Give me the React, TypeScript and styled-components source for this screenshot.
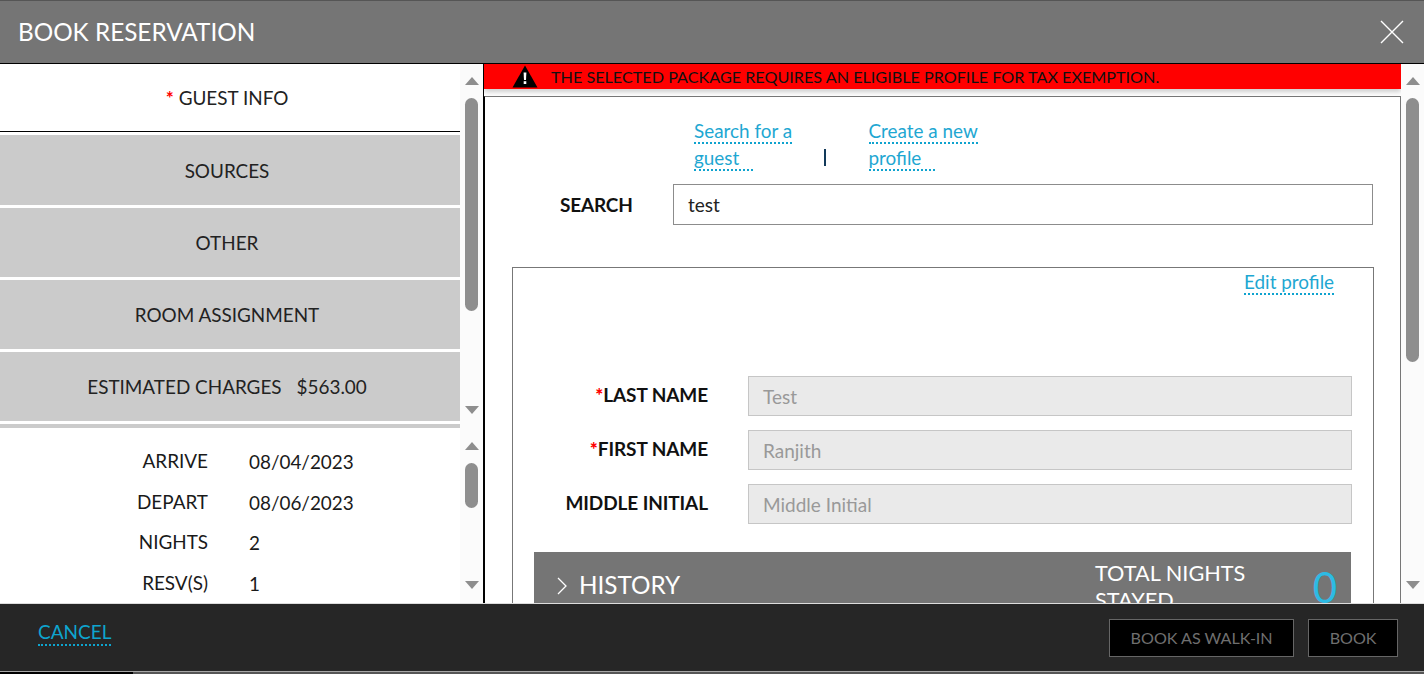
import { createGlobalStyle } from "styled-components";
import styled from "styled-components";

const Global = createGlobalStyle`
  html, body {
    margin: 0;
    padding: 0;
    height: 100%;
    overflow: hidden;
    background: #fff;
    font-family: Lato, "Open Sans", sans-serif;
  }
  * { box-sizing: border-box; }
`;

const Page = styled.div`
  width: 1424px;
  height: 674px;
  display: flex;
  flex-direction: column;
  overflow: hidden;
`;

const Header = styled.header`
  height: 64px;
  flex: none;
  background: #757575;
  border-top: 1px solid #555;
  border-bottom: 1px solid #000;
  display: flex;
  align-items: center;
  justify-content: space-between;
  padding: 0 20px 0 18px;
  color: #fff;
  > h1 {
    margin: -2px 0 0;
    font-size: 24.3px;
    font-weight: 400;
  }
`;

const Body = styled.div`
  height: 539px;
  flex: none;
  display: flex;
  overflow: hidden;
`;

const LeftColumn = styled.div`
  width: 484px;
  flex: none;
  border-right: 1px solid #000;
  display: flex;
  flex-direction: column;
`;

const TabsPane = styled.div`
  height: 364px;
  flex: none;
  display: flex;
`;

const TabList = styled.div`
  width: 460px;
  flex: none;
  display: flex;
  flex-direction: column;
  gap: 3px;
`;

const Tab = styled.div<{ $active?: boolean }>`
  height: ${(p) => (p.$active ? "68px" : "69px")};
  flex: none;
  display: flex;
  align-items: center;
  justify-content: center;
  padding-right: 6px;
  font-size: 18.9px;
  color: #222;
  background: ${(p) => (p.$active ? "#fff" : "#cbcbcb")};
  border-bottom: ${(p) => (p.$active ? "1px solid #000" : "none")};
  &:nth-child(2) {
    height: 70px;
  }
  > b {
    color: #f00;
    font-weight: 700;
    margin-right: 5px;
  }
  > span + span {
    margin-left: 15px;
  }
`;

const TabDivider = styled.div`
  height: 4px;
  flex: none;
  background: #cbcbcb;
`;

const SummaryPane = styled.div`
  flex: 1;
  min-height: 0;
  display: flex;
`;

const Summary = styled.div`
  width: 460px;
  flex: none;
  background: #fff;
  padding-top: 14px;
  display: grid;
  grid-template-columns: 208px 1fr;
  grid-auto-rows: 40.67px;
  column-gap: 41px;
  align-content: start;
  font-size: 18.9px;
  color: #1a1a1a;
  overflow: hidden;
`;

const SummaryLabel = styled.div`
  text-align: right;
  line-height: 38px;
`;

const SummaryValue = styled.div`
  line-height: 40px;
`;

const Track = styled.div<{ $top: number }>`
  width: 23px;
  flex: none;
  background: #fbfbfb;
  display: flex;
  flex-direction: column;
  align-items: center;
  padding: ${(p) => p.$top}px 0 14px;
`;

const ArrowUp = styled.div`
  flex: none;
  width: 0;
  height: 0;
  border-left: 7.5px solid transparent;
  border-right: 7.5px solid transparent;
  border-bottom: 8px solid #8e8e8e;
`;

const ArrowDown = styled(ArrowUp)`
  border-bottom: none;
  border-top: 8px solid #8e8e8e;
  margin-top: auto;
`;

const Thumb = styled.div<{ $size: number }>`
  flex: none;
  width: 13px;
  margin-top: 13px;
  height: ${(p) => p.$size}px;
  border-radius: 7px;
  background: #8e8e8e;
`;

function Scrollbar({ top = 13, size }: { top?: number; size: number }) {
  return (
    <Track $top={top}>
      <ArrowUp />
      <Thumb $size={size} />
      <ArrowDown />
    </Track>
  );
}

const RightColumn = styled.div`
  flex: 1;
  min-width: 0;
  display: flex;
`;

const Content = styled.div`
  width: 917px;
  flex: none;
  overflow: hidden;
  display: flex;
  flex-direction: column;
`;

const Alert = styled.div`
  height: 25px;
  flex: none;
  background: #f00;
  display: flex;
  align-items: center;
  padding-left: 28px;
  gap: 13px;
  font-size: 16.2px;
  color: #111;
  box-shadow: 0 3px 5px rgba(0, 0, 0, 0.2);
  position: relative;
`;

const GuestPanel = styled.section`
  margin-top: 7px;
  flex: 1;
  min-height: 0;
  border: 1px solid #777;
  border-left-color: #000;
  border-bottom: none;
  padding: 0 27px;
  overflow: hidden;
`;

const LinkRow = styled.div`
  display: flex;
  align-items: center;
  margin-left: 182px;
  padding-top: 20px;
`;

const LinkText = styled.a<{ $width?: number }>`
  display: block;
  width: ${(p) => p.$width ?? 120}px;
  font-size: 18.9px;
  line-height: 27px;
  color: #1ea7d2;
  white-space: nowrap;
  > span {
    border-bottom: 2px dotted #0fa3cf;
    display: inline-block;
    line-height: 23px;
  }
  > span + br + span {
    margin-top: 2px;
    padding-right: 14px;
  }
`;

const LinkDivider = styled.div`
  width: 1.5px;
  height: 17px;
  background: #123a5a;
  margin: 27px 43px 0 0;
`;

const SearchRow = styled.div`
  display: flex;
  align-items: center;
  margin-top: 13px;
  height: 41px;
`;

const SearchLabel = styled.label`
  width: 120px;
  margin-left: 48px;
  font-size: 19px;
  font-weight: 700;
  color: #111;
  flex: none;
  letter-spacing: -0.2px;
`;

const SearchInput = styled.div`
  width: 700px;
  height: 41px;
  flex: none;
  margin-left: -7px;
  border: 1px solid #8c8c8c;
  padding: 0 14px;
  display: flex;
  align-items: center;
  font-size: 19px;
  color: #222;
`;

const ProfileCard = styled.div`
  width: 862px;
  margin-top: 42px;
  border: 1px solid #777;
  border-bottom: none;
  height: 400px;
  padding: 0 21px;
`;

const EditRow = styled.div`
  display: flex;
  justify-content: flex-end;
  padding: 0 18px 0 0;
  height: 108px;
`;

const FieldRow = styled.div`
  display: flex;
  align-items: center;
  margin-bottom: 14px;
`;

const FieldLabel = styled.label`
  width: 174px;
  flex: none;
  text-align: right;
  font-size: 19px;
  font-weight: 700;
  color: #111;
  letter-spacing: -0.1px;
  padding-bottom: 4px;
  > b {
    color: #f00;
  }
`;

const FieldInput = styled.div`
  width: 604px;
  height: 40px;
  margin-left: 40px;
  background: #eaeaea;
  border: 1px solid #c6c6c6;
  display: flex;
  align-items: center;
  padding: 0 14px;
  font-size: 19px;
  color: #999;
`;

const HistoryBar = styled.div`
  margin-top: 28px;
  width: 817px;
  height: 70px;
  background: #757575;
  color: #fff;
  display: flex;
  align-items: flex-start;
  padding: 7px 14px 0 22px;
  > svg {
    margin-top: 18px;
    flex: none;
  }
  > h2 {
    margin: 11px 0 0 11px;
    font-size: 24.3px;
    line-height: 30px;
    font-weight: 400;
    flex: 1;
  }
`;

const TotalLabel = styled.div`
  width: 170px;
  margin: 1px 46px 0 0;
  font-size: 21.7px;
  line-height: 27px;
`;

const TotalValue = styled.div`
  font-size: 42px;
  line-height: 57px;
  color: #2dbbe4;
  width: 26px;
  text-align: right;
`;

const Footer = styled.footer`
  height: 68px;
  flex: none;
  background: #262626;
  border-top: 1px solid #ddd;
  display: flex;
  align-items: center;
  padding: 0 26px 0 38px;
  > a {
    font-size: 19px;
    color: #0ea5cf;
    border-bottom: 2px dotted #0ea5cf;
    line-height: 24px;
    margin-right: auto;
    margin-top: -9px;
  }
`;

const FooterButton = styled.button`
  height: 38px;
  margin-left: 14px;
  padding: 0 20.5px;
  background: #000;
  border: 1px solid #666;
  color: #6f6f6f;
  font-family: inherit;
  font-size: 16.1px;
`;

const BottomStrip = styled.div`
  flex: 1;
  background: #555;
  border-top: 1px solid #a5a5a5;
  > div {
    width: 133px;
    height: 100%;
    background: #000;
  }
`;

function App() {
  return (
    <Page>
      <Global />
      <Header>
        <h1>BOOK RESERVATION</h1>
        <svg width="24" height="24" viewBox="0 0 24 24" fill="none" stroke="#fff" strokeWidth="1.4">
          <path d="M1 1 L23 23 M23 1 L1 23" />
        </svg>
      </Header>
      <Body>
        <LeftColumn>
          <TabsPane>
            <TabList>
              <Tab $active>
                <b>*</b>GUEST INFO
              </Tab>
              <Tab>SOURCES</Tab>
              <Tab>OTHER</Tab>
              <Tab>ROOM ASSIGNMENT</Tab>
              <Tab>
                <span>ESTIMATED CHARGES</span>
                <span>$563.00</span>
              </Tab>
              <TabDivider />
            </TabList>
            <Scrollbar size={213} />
          </TabsPane>
          <SummaryPane>
            <Summary>
              <SummaryLabel>ARRIVE</SummaryLabel>
              <SummaryValue>08/04/2023</SummaryValue>
              <SummaryLabel>DEPART</SummaryLabel>
              <SummaryValue>08/06/2023</SummaryValue>
              <SummaryLabel>NIGHTS</SummaryLabel>
              <SummaryValue>2</SummaryValue>
              <SummaryLabel>RESV(S)</SummaryLabel>
              <SummaryValue>1</SummaryValue>
            </Summary>
            <Scrollbar top={14} size={45} />
          </SummaryPane>
        </LeftColumn>
        <RightColumn>
          <Content>
            <Alert>
              <svg width="26" height="23" viewBox="0 0 26 23">
                <path d="M13 0.5 L25.5 22.5 H0.5 Z" fill="#000" />
                <path d="M11.6 7.5 H14.4 L14 15 H12 Z" fill="#fff" />
                <rect x="11.7" y="16.2" width="2.6" height="2.8" fill="#fff" />
              </svg>
              THE SELECTED PACKAGE REQUIRES AN ELIGIBLE PROFILE FOR TAX EXEMPTION.
            </Alert>
            <GuestPanel>
              <LinkRow>
                <LinkText $width={130}>
                  <span>Search for a</span>
                  <br />
                  <span>guest</span>
                </LinkText>
                <LinkDivider />
                <LinkText>
                  <span>Create a new</span>
                  <br />
                  <span>profile</span>
                </LinkText>
              </LinkRow>
              <SearchRow>
                <SearchLabel>SEARCH</SearchLabel>
                <SearchInput>test</SearchInput>
              </SearchRow>
              <ProfileCard>
                <EditRow>
                  <LinkText $width={90}>
                    <span>Edit profile</span>
                  </LinkText>
                </EditRow>
                <FieldRow>
                  <FieldLabel>
                    <b>*</b>LAST NAME
                  </FieldLabel>
                  <FieldInput>Test</FieldInput>
                </FieldRow>
                <FieldRow>
                  <FieldLabel>
                    <b>*</b>FIRST NAME
                  </FieldLabel>
                  <FieldInput>Ranjith</FieldInput>
                </FieldRow>
                <FieldRow>
                  <FieldLabel>MIDDLE INITIAL</FieldLabel>
                  <FieldInput>Middle Initial</FieldInput>
                </FieldRow>
                <HistoryBar>
                  <svg width="12" height="18" viewBox="0 0 12 18" fill="none" stroke="#fff" strokeWidth="1.3">
                    <path d="M2 1 L10 9 L2 17" />
                  </svg>
                  <h2>HISTORY</h2>
                  <TotalLabel>TOTAL NIGHTS STAYED</TotalLabel>
                  <TotalValue>0</TotalValue>
                </HistoryBar>
              </ProfileCard>
            </GuestPanel>
          </Content>
          <Scrollbar size={264} />
        </RightColumn>
      </Body>
      <Footer>
        <a>CANCEL</a>
        <FooterButton>BOOK AS WALK-IN</FooterButton>
        <FooterButton>BOOK</FooterButton>
      </Footer>
      <BottomStrip>
        <div />
      </BottomStrip>
    </Page>
  );
}

export default App;
